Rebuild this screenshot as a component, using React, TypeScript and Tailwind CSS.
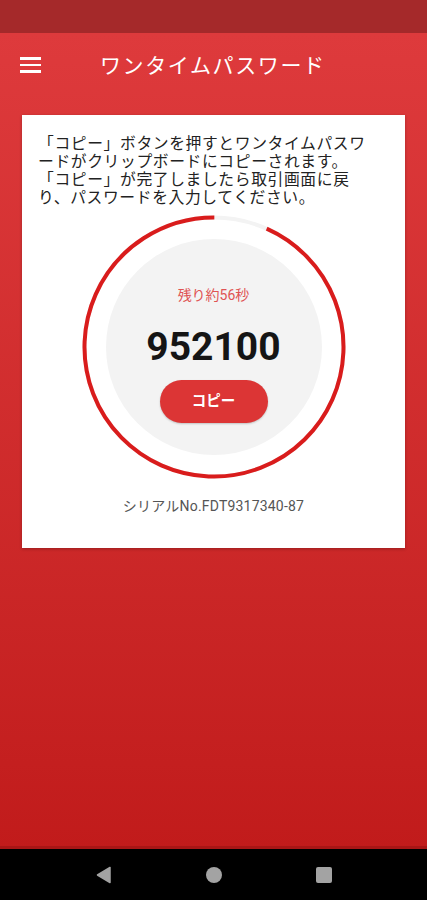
import React from "react";

const RING_R = 129.5;
const CIRC = 2 * Math.PI * RING_R;

function TimerRing({ remaining }: { remaining: number }) {
  const red = (CIRC * remaining) / 60;
  const startDeg = -90 + (360 * (60 - remaining)) / 60;
  return (
    <svg className="absolute inset-0" width="266" height="266" viewBox="0 0 266 266">
      <circle cx="133" cy="133" r={RING_R} fill="none" stroke="#f3f3f3" strokeWidth="4" />
      <circle
        cx="133"
        cy="133"
        r={RING_R}
        fill="none"
        stroke="#d91c1c"
        strokeWidth="4"
        strokeDasharray={`${red} ${CIRC}`}
        transform={`rotate(${startDeg} 133 133)`}
      />
    </svg>
  );
}

export default function App() {
  return (
    <div className="flex h-[900px] w-[427px] flex-col font-['Roboto','Noto_Sans_CJK_JP',sans-serif]">
      <div className="h-[33px] bg-[#a5292a]"></div>

      <div className="flex flex-1 flex-col bg-gradient-to-b from-[#de3a3c] to-[#c11b1b]">
        <div className="flex h-[64px] items-center pl-[20px]">
          <div className="flex w-[21px] flex-col gap-[4px]">
            <div className="h-[2.5px] bg-white"></div>
            <div className="h-[2.5px] bg-white"></div>
            <div className="h-[2.5px] bg-white"></div>
          </div>
          <div className="ml-[59px] text-[21px] tracking-[1.6px] text-white font-['Noto_Sans_CJK_JP',sans-serif]">
            ワンタイムパスワード
          </div>
        </div>

        <div className="mx-[22px] mt-[18px] flex flex-col items-center bg-white pb-[33px] pt-[19px] shadow-[0_1px_3px_rgba(0,0,0,0.25)]">
          <div className="w-full pl-[16px] text-[15.8px] leading-[18px] tracking-[0.6px] text-[#222] font-['Noto_Sans_CJK_JP',sans-serif]">
            <div>「コピー」ボタンを押すとワンタイムパスワ</div>
            <div>ードがクリップボードにコピーされます。</div>
            <div>「コピー」が完了しましたら取引画面に戻</div>
            <div>り、パスワードを入力してください。</div>
          </div>

          <div className="relative mt-[8px] flex h-[266px] w-[266px] items-center justify-center">
            <TimerRing remaining={56} />
            <div className="relative flex h-[216px] w-[216px] flex-col items-center rounded-full bg-[#f3f3f3] pt-[46px]">
              <div className="text-[14px] leading-[20px] text-[#e05353]">残り約56秒</div>
              <div className="mt-[18px] text-[39px] font-bold leading-[48px] text-[#151515]">952100</div>
              <button className="mt-[9px] h-[43px] w-[108px] rounded-full bg-[#dc3535] text-[14.5px] font-bold text-white shadow-[0_1px_2px_rgba(0,0,0,0.2)]">
                コピー
              </button>
            </div>
          </div>

          <div className="mt-[17px] text-[14px] leading-[18px] tracking-[0.2px] text-[#555]">シリアルNo.FDT9317340-87</div>
        </div>
        <div className="flex-1"></div>
        <div className="h-[3px] bg-[#a81616]"></div>
      </div>

      <div className="flex h-[51px] items-center justify-center gap-[92px] bg-black">
        <svg width="18" height="18" viewBox="0 0 18 18">
          <path d="M15 1.5 L15 16.5 L2.5 9 Z" fill="#a3a3a3" stroke="#a3a3a3" strokeWidth="1.5" strokeLinejoin="round" />
        </svg>
        <div className="mx-[1px] h-[16px] w-[16px] rounded-full bg-[#a3a3a3]"></div>
        <div className="mx-[1px] h-[16px] w-[16px] rounded-[2px] bg-[#a3a3a3]"></div>
      </div>
    </div>
  );
}
